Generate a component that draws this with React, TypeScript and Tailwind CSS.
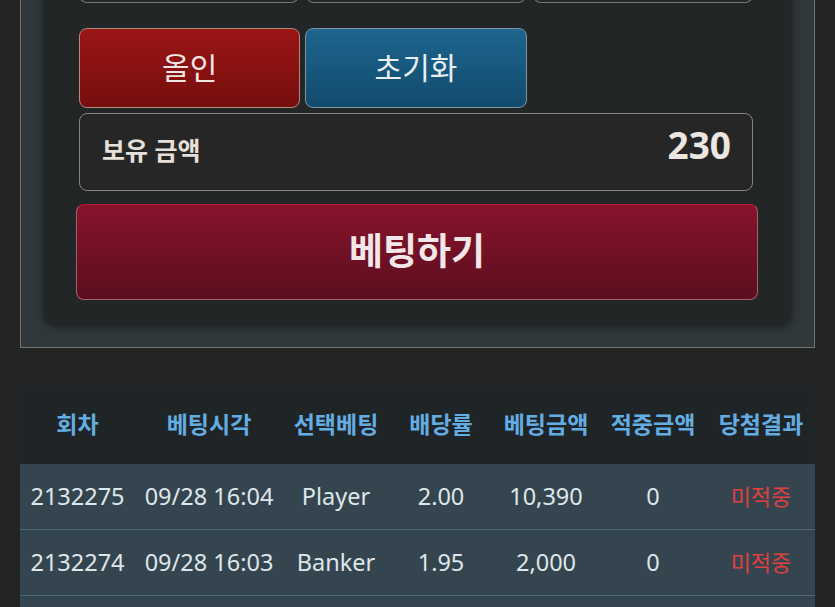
import React from "react";

const rows = [
  ["2132275", "09/28 16:04", "Player", "2.00", "10,390", "0", "미적중"],
  ["2132274", "09/28 16:03", "Banker", "1.95", "2,000", "0", "미적중"],
];

const heads = ["회차", "베팅시각", "선택베팅", "배당률", "베팅금액", "적중금액", "당첨결과"];
const cols = "grid-cols-[115px_148px_106px_104px_106px_108px_108px]";

export default function App() {
  return (
    <div
      className="w-[835px] h-[607px] overflow-hidden bg-[#232524]"
      style={{ fontFamily: '"Noto Sans", "Noto Sans CJK KR", sans-serif' }}
    >
      <div className="mx-[20px] w-[795px] -mt-[32px] border border-[#76746c] border-t-0 bg-[#30383b] px-[23px] pb-[24px]">
        <div className="rounded-b-[10px] bg-[#222627] pl-[35px] pr-[38px] pb-[23px] shadow-[0_3px_8px_rgba(0,0,0,0.55)]">
          <div className="grid grid-cols-3 gap-[7px]">
            <div className="h-[35px] rounded-b-[8px] border border-t-0 border-[#77766f] bg-[#262626]" />
            <div className="h-[35px] rounded-b-[8px] border border-t-0 border-[#77766f] bg-[#262626]" />
            <div className="h-[35px] rounded-b-[8px] border border-t-0 border-[#77766f] bg-[#262626]" />
          </div>
          <div className="mt-[25px] grid grid-cols-3 gap-[5px]">
            <div className="flex h-[80px] items-center justify-center rounded-[8px] border border-[#b08a7c] bg-gradient-to-b from-[#9b1515] to-[#760e0e] pb-[2px] text-[30px] text-[#f3e6e2]">
              올인
            </div>
            <div className="flex h-[80px] items-center justify-center rounded-[8px] border border-[#7f949c] bg-gradient-to-b from-[#1d6690] to-[#124a6c] pb-[2px] text-[30px] text-[#e8eef2]">
              초기화
            </div>
            <div />
          </div>
          <div className="mt-[5px] flex h-[78px] items-center justify-between rounded-[8px] border border-[#8a857a] bg-[#262626] pl-[22px] pr-[21px]">
            <span className="mb-[3px] text-[25px] font-bold text-[#e6e0da]">보유 금액</span>
            <span className="mb-[15px] text-[37px] font-bold text-[#ebe6e0]">230</span>
          </div>
          <div className="-ml-[3px] -mr-[5px] mt-[13px] flex h-[96px] items-center justify-center rounded-[8px] border border-[#a06468] border-t-[#b02030] bg-gradient-to-b from-[#87132c] to-[#5c0e1e] pb-[2px] text-[37px] font-bold text-[#f2e6e8]">
            베팅하기
          </div>
        </div>
      </div>

      <div className="mx-[20px] mt-[37px] w-[795px]">
        <div className={`grid h-[79px] ${cols} items-center bg-[#1f2427] text-[23px] font-bold text-[#64ade2]`}>
          {heads.map((h) => (
            <div key={h} className="text-center">
              {h}
            </div>
          ))}
        </div>
        {rows.map((r, i) => (
          <div
            key={i}
            className={`grid h-[66px] ${cols} items-center border-b border-[#4b6675] bg-[#35454f] text-[23.5px] text-[#dfe6ea]`}
          >
            {r.map((c, j) => (
              <div
                key={j}
                className={j === 6 ? "text-center text-[22px] text-[#e0403e]" : "text-center"}
              >
                {c}
              </div>
            ))}
          </div>
        ))}
        <div className={`grid h-[66px] ${cols} border-b border-[#4b6675] bg-[#35454f]`} />
      </div>
    </div>
  );
}
